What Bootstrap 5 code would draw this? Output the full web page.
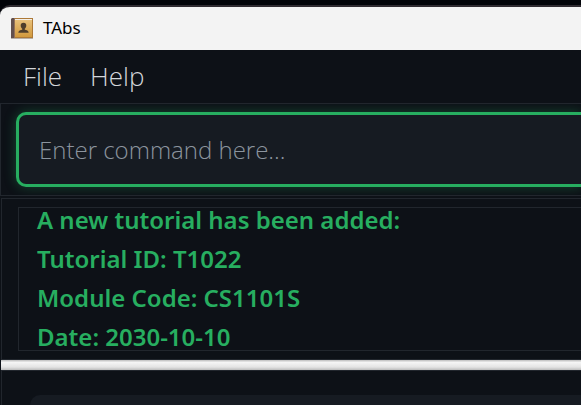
<!DOCTYPE html>
<html lang="en">
<head>
<meta charset="utf-8">
<meta name="viewport" content="width=device-width, initial-scale=1">
<title>TAbs</title>
<link href="https://cdn.jsdelivr.net/npm/bootstrap@5.3.0/dist/css/bootstrap.min.css" rel="stylesheet">
<style>
body { background: #020409; color: #d3d6da; font-family: "Open Sans", "Noto Sans", sans-serif; }
.app-frame { padding-top: 5px; }
.app-window { border-top: 2px solid #2f2b31; border-top-left-radius: 10px; background: #0d1117; overflow: hidden; }
.title-bar { height: 43px; background: #f3f3f3; color: #000; font-family: "Noto Sans", sans-serif; font-size: 17px; line-height: 24px; padding: 0 0 2px 11px; gap: 10px; }
.menu-bar { height: 53px; padding: 0 0 2px 9px; }
.menu-bar .btn { font-size: 26px; line-height: 32px; font-weight: 300; color: #d3d6da; padding: 0 14px; border: 0; }
.command-pane { border: 1px solid #21262d; border-right: 0; padding: 8px 0 8px 15px; overflow: hidden; }
.command-box { height: 75px; background: #161b22; border: 3px solid #27ae60; border-right: 0; border-radius: 10px 0 0 10px; color: #d3d6da; font-size: 24px; font-weight: 300; padding: 0 20px; box-shadow: 0 0 12px rgba(39,174,96,.35); }
.command-box:focus { background: #161b22; border-color: #27ae60; color: #d3d6da; }
.command-box::placeholder { color: #8b949e; opacity: 1; }
.result-pane { margin: 2px 0 0 1px; border: 1px solid #21262d; border-right: 0; padding: 8px 0 8px 16px; }
.result-text { border: 1px solid #21262d; border-right: 0; height: 144px; gap: 15px; padding-left: 18px; color: #27ae60; font-family: "Noto Sans", sans-serif; font-size: 24px; line-height: 24px; font-weight: 600; }
.divider { height: 10px; margin-left: 1px; background: linear-gradient(#c8c8c8 0 1px, #f6f6f6 2px, #e4e4e4 7px, #bcbcbc); }
.list-pane { margin-left: 1px; border: 1px solid #21262d; border-right: 0; border-bottom: 0; padding: 24px 0 0 28px; }
.list-entry { background: #161b22; border-top-left-radius: 10px; }
</style>
</head>
<body>
<div class="app-frame vh-100 d-flex flex-column">
<main class="app-window flex-grow-1 d-flex flex-column">
  <header class="title-bar d-flex align-items-center">
    <svg width="22" height="22" viewBox="0 0 22 22" aria-hidden="true">
      <defs><linearGradient id="cover" x2="0" y2="1"><stop stop-color="#e8c079"/><stop offset="1" stop-color="#d1993d"/></linearGradient></defs>
      <path d="M1 1H22V21H1Z" fill="#ad7937"/>
      <path d="M4 2H21V3H4Z" fill="#f2eee7"/>
      <path d="M4 3H21V20H4Z" fill="url(#cover)"/>
      <path d="M0 2L1 1H3V21H0Z" fill="#62504d"/>
      <path d="M3 1H4V21H3Z" fill="#937057"/>
      <path d="M0 21H22V22H0Z" fill="#b7afa5"/>
      <path d="M12.500 5.800C10.600 5.800 9.600 7 9.700 8.800C9.800 10.200 10.500 11.100 11.200 11.700V12.800C9.500 13.200 7.500 13.400 7.300 15.800H17.700C17.500 13.400 15.500 13.200 13.800 12.800V11.700C14.500 11.100 15.200 10.200 15.300 8.800C15.400 7 14.400 5.800 12.500 5.800Z" fill="#4f3e2b"/>
    </svg>
    <span>TAbs</span>
  </header>
  <nav class="menu-bar d-flex align-items-center" aria-label="Main menu">
    <button type="button" class="btn">File</button>
    <button type="button" class="btn">Help</button>
  </nav>
  <form class="command-pane">
    <input type="text" class="form-control command-box" placeholder="Enter command here..." aria-label="Command">
  </form>
  <section class="result-pane" aria-label="Result">
    <div class="result-text d-flex flex-column" role="status">
      <div>A new tutorial has been added:</div>
      <div>Tutorial ID: T1022</div>
      <div>Module Code: CS1101S</div>
      <div>Date: 2030-10-10</div>
    </div>
  </section>
  <div class="divider flex-shrink-0" role="separator"></div>
  <section class="list-pane flex-grow-1 d-flex flex-column" aria-label="Tutorials">
    <div class="list-entry flex-grow-1"></div>
  </section>
</main>
</div>
<script src="https://cdn.jsdelivr.net/npm/bootstrap@5.3.0/dist/js/bootstrap.bundle.min.js"></script>
</body>
</html>
